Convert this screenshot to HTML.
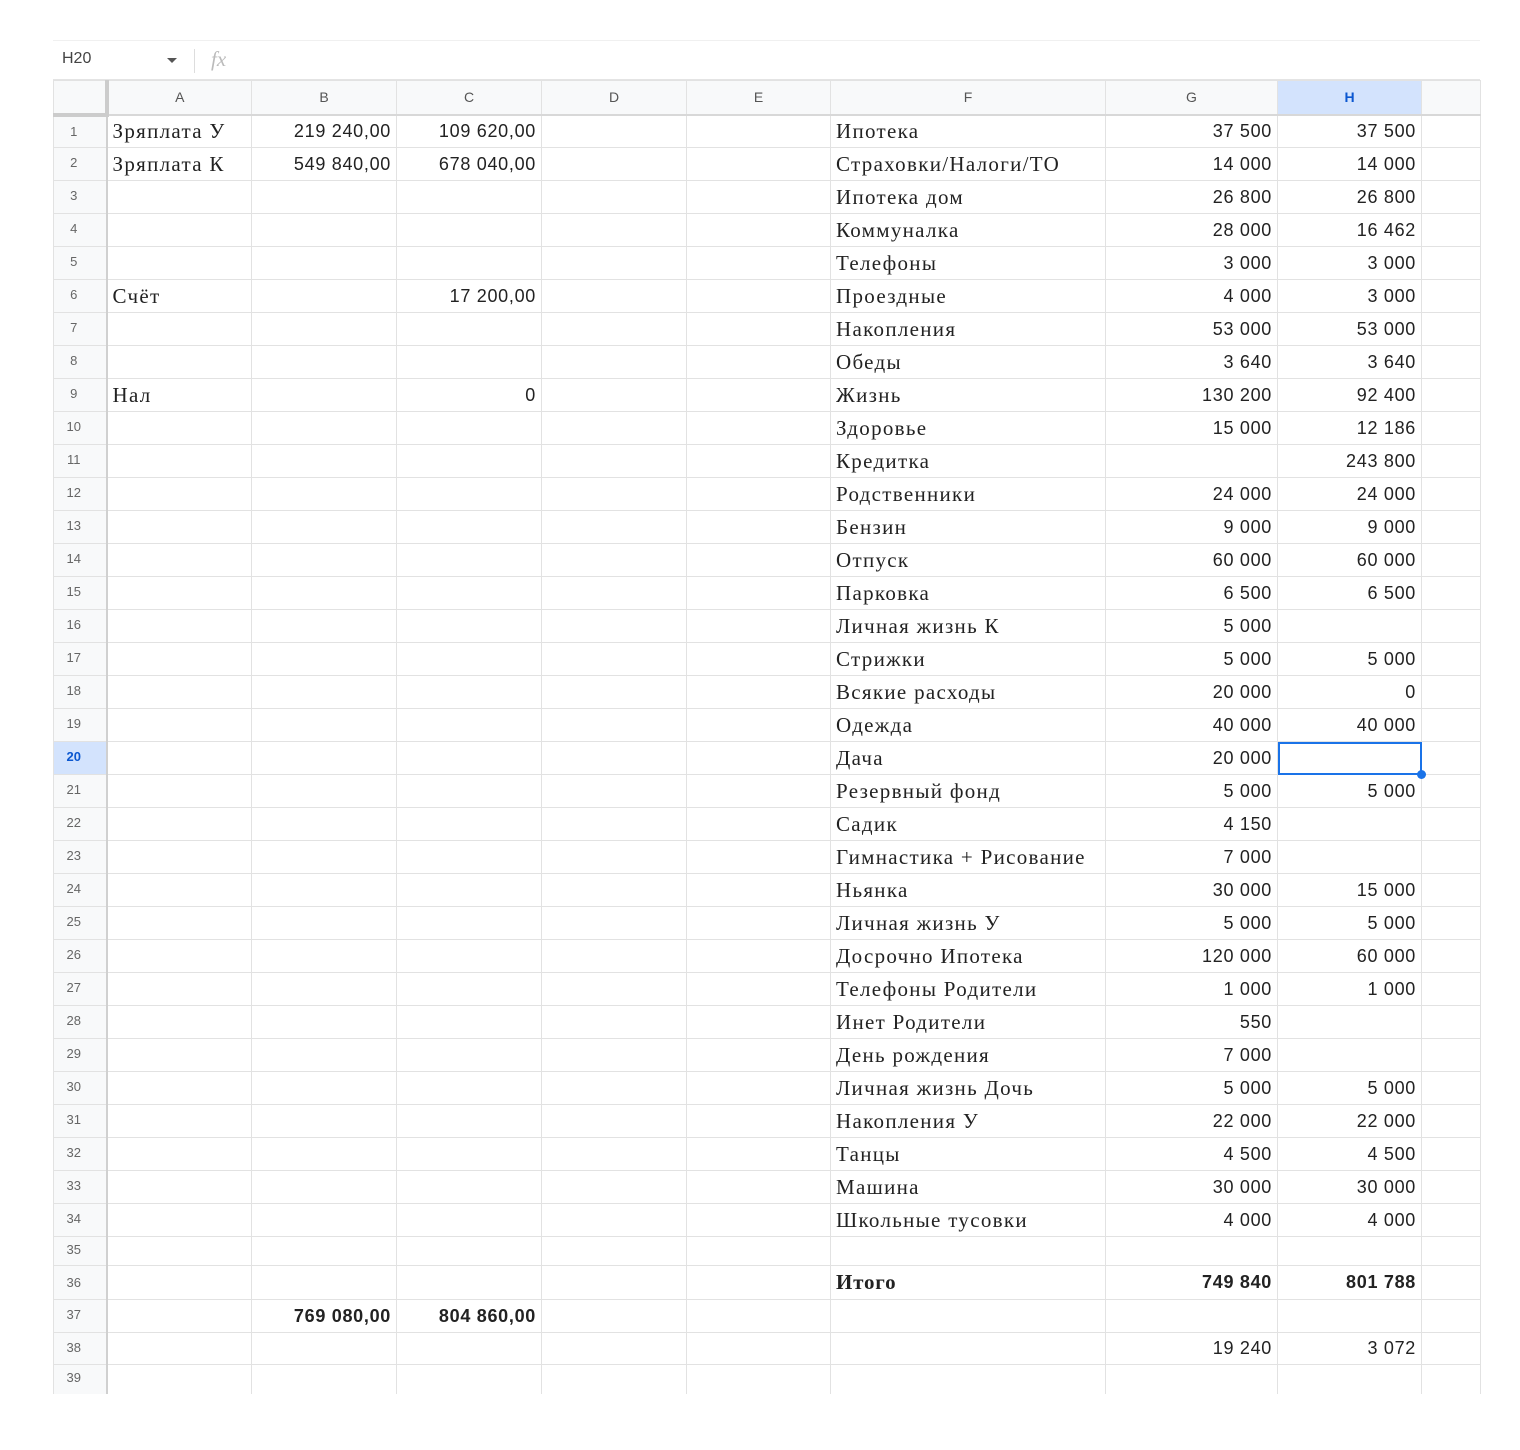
<!DOCTYPE html>
<html><head><meta charset="utf-8"><style>
body{margin:0;background:#fff;width:1520px;height:1450px;position:relative;overflow:hidden;font-family:"Liberation Sans",sans-serif}
.fb{position:absolute;left:53px;top:40px;width:1427px;height:38px;border-top:1px solid #f0f0f0;border-bottom:2px solid #e4e4e4}
.fb .nm{position:absolute;left:9px;top:9px;font-size:16px;color:#444}
.fb .ar{position:absolute;left:114px;top:17px;width:0;height:0;border-left:5px solid transparent;border-right:5px solid transparent;border-top:5px solid #555}
.fb .sp{position:absolute;left:141px;top:8px;width:1px;height:24px;background:#ddd}
.fb .fx{position:absolute;left:158px;top:6px;font-family:"Liberation Serif",serif;font-style:italic;font-size:21px;color:#bbb}
table{position:absolute;left:53px;top:80px;border-collapse:collapse;table-layout:fixed;width:1427px}
td{border:1px solid #e2e2e2;padding:0 5px;white-space:nowrap;overflow:visible;color:#2a2a2a;box-sizing:border-box}
tr.h td{background:#f8f9fa;height:34px;text-align:center;font-size:14px;color:#555;border-bottom:2px solid #d8d8d8}
td.r{background:#f8f9fa;text-align:center;font-size:13px;color:#666;border-right:2px solid #d0d0d0;padding:0 12px 0 0;vertical-align:top;padding-top:7px}
td.t{font-family:"Liberation Serif",serif;font-size:21px;letter-spacing:1.3px;color:#222}
td.n{text-align:right;font-size:18px;letter-spacing:0.7px;color:#222}
.b{font-weight:bold}
td.sel{outline:2px solid #1a73e8;outline-offset:-2px;position:relative}
.dot{position:absolute;right:-5px;bottom:-5px;width:9px;height:9px;border-radius:50%;background:#1a73e8}
</style></head><body>
<div class="fb"><span class="nm">H20</span><span class="ar"></span><span class="sp"></span><span class="fx">fx</span></div>
<table>
<colgroup><col style="width:53px"><col style="width:145px"><col style="width:145px"><col style="width:145px"><col style="width:145px"><col style="width:144px"><col style="width:275px"><col style="width:172px"><col style="width:144px"><col style="width:59px"></colgroup>
<tr class="h"><td style="border-right:4px solid #ccc;border-bottom:4px solid #ccc"></td><td>A</td><td>B</td><td>C</td><td>D</td><td>E</td><td>F</td><td>G</td><td style="background:#d3e3fd;color:#0b57d0;font-weight:bold">H</td><td></td></tr>
<tr style="height:33px"><td class="r">1</td><td class="t">Зряплата У</td><td class="n">219 240,00</td><td class="n">109 620,00</td><td></td><td></td><td class="t">Ипотека</td><td class="n">37 500</td><td class="n">37 500</td><td></td></tr>
<tr style="height:33px"><td class="r">2</td><td class="t">Зряплата К</td><td class="n">549 840,00</td><td class="n">678 040,00</td><td></td><td></td><td class="t">Страховки/Налоги/ТО</td><td class="n">14 000</td><td class="n">14 000</td><td></td></tr>
<tr style="height:33px"><td class="r">3</td><td></td><td></td><td></td><td></td><td></td><td class="t">Ипотека дом</td><td class="n">26 800</td><td class="n">26 800</td><td></td></tr>
<tr style="height:33px"><td class="r">4</td><td></td><td></td><td></td><td></td><td></td><td class="t">Коммуналка</td><td class="n">28 000</td><td class="n">16 462</td><td></td></tr>
<tr style="height:33px"><td class="r">5</td><td></td><td></td><td></td><td></td><td></td><td class="t">Телефоны</td><td class="n">3 000</td><td class="n">3 000</td><td></td></tr>
<tr style="height:33px"><td class="r">6</td><td class="t">Счёт</td><td></td><td class="n">17 200,00</td><td></td><td></td><td class="t">Проездные</td><td class="n">4 000</td><td class="n">3 000</td><td></td></tr>
<tr style="height:33px"><td class="r">7</td><td></td><td></td><td></td><td></td><td></td><td class="t">Накопления</td><td class="n">53 000</td><td class="n">53 000</td><td></td></tr>
<tr style="height:33px"><td class="r">8</td><td></td><td></td><td></td><td></td><td></td><td class="t">Обеды</td><td class="n">3 640</td><td class="n">3 640</td><td></td></tr>
<tr style="height:33px"><td class="r">9</td><td class="t">Нал</td><td></td><td class="n">0</td><td></td><td></td><td class="t">Жизнь</td><td class="n">130 200</td><td class="n">92 400</td><td></td></tr>
<tr style="height:33px"><td class="r">10</td><td></td><td></td><td></td><td></td><td></td><td class="t">Здоровье</td><td class="n">15 000</td><td class="n">12 186</td><td></td></tr>
<tr style="height:33px"><td class="r">11</td><td></td><td></td><td></td><td></td><td></td><td class="t">Кредитка</td><td class="n"></td><td class="n">243 800</td><td></td></tr>
<tr style="height:33px"><td class="r">12</td><td></td><td></td><td></td><td></td><td></td><td class="t">Родственники</td><td class="n">24 000</td><td class="n">24 000</td><td></td></tr>
<tr style="height:33px"><td class="r">13</td><td></td><td></td><td></td><td></td><td></td><td class="t">Бензин</td><td class="n">9 000</td><td class="n">9 000</td><td></td></tr>
<tr style="height:33px"><td class="r">14</td><td></td><td></td><td></td><td></td><td></td><td class="t">Отпуск</td><td class="n">60 000</td><td class="n">60 000</td><td></td></tr>
<tr style="height:33px"><td class="r">15</td><td></td><td></td><td></td><td></td><td></td><td class="t">Парковка</td><td class="n">6 500</td><td class="n">6 500</td><td></td></tr>
<tr style="height:33px"><td class="r">16</td><td></td><td></td><td></td><td></td><td></td><td class="t">Личная жизнь К</td><td class="n">5 000</td><td class="n"></td><td></td></tr>
<tr style="height:33px"><td class="r">17</td><td></td><td></td><td></td><td></td><td></td><td class="t">Стрижки</td><td class="n">5 000</td><td class="n">5 000</td><td></td></tr>
<tr style="height:33px"><td class="r">18</td><td></td><td></td><td></td><td></td><td></td><td class="t">Всякие расходы</td><td class="n">20 000</td><td class="n">0</td><td></td></tr>
<tr style="height:33px"><td class="r">19</td><td></td><td></td><td></td><td></td><td></td><td class="t">Одежда</td><td class="n">40 000</td><td class="n">40 000</td><td></td></tr>
<tr style="height:33px"><td class="r" style="background:#d3e3fd;color:#0b57d0;font-weight:bold">20</td><td></td><td></td><td></td><td></td><td></td><td class="t">Дача</td><td class="n">20 000</td><td class="n sel"><span class="dot"></span></td><td></td></tr>
<tr style="height:33px"><td class="r">21</td><td></td><td></td><td></td><td></td><td></td><td class="t">Резервный фонд</td><td class="n">5 000</td><td class="n">5 000</td><td></td></tr>
<tr style="height:33px"><td class="r">22</td><td></td><td></td><td></td><td></td><td></td><td class="t">Садик</td><td class="n">4 150</td><td class="n"></td><td></td></tr>
<tr style="height:33px"><td class="r">23</td><td></td><td></td><td></td><td></td><td></td><td class="t">Гимнастика + Рисование</td><td class="n">7 000</td><td class="n"></td><td></td></tr>
<tr style="height:33px"><td class="r">24</td><td></td><td></td><td></td><td></td><td></td><td class="t">Ньянка</td><td class="n">30 000</td><td class="n">15 000</td><td></td></tr>
<tr style="height:33px"><td class="r">25</td><td></td><td></td><td></td><td></td><td></td><td class="t">Личная жизнь У</td><td class="n">5 000</td><td class="n">5 000</td><td></td></tr>
<tr style="height:33px"><td class="r">26</td><td></td><td></td><td></td><td></td><td></td><td class="t">Досрочно Ипотека</td><td class="n">120 000</td><td class="n">60 000</td><td></td></tr>
<tr style="height:33px"><td class="r">27</td><td></td><td></td><td></td><td></td><td></td><td class="t">Телефоны Родители</td><td class="n">1 000</td><td class="n">1 000</td><td></td></tr>
<tr style="height:33px"><td class="r">28</td><td></td><td></td><td></td><td></td><td></td><td class="t">Инет Родители</td><td class="n">550</td><td class="n"></td><td></td></tr>
<tr style="height:33px"><td class="r">29</td><td></td><td></td><td></td><td></td><td></td><td class="t">День рождения</td><td class="n">7 000</td><td class="n"></td><td></td></tr>
<tr style="height:33px"><td class="r">30</td><td></td><td></td><td></td><td></td><td></td><td class="t">Личная жизнь Дочь</td><td class="n">5 000</td><td class="n">5 000</td><td></td></tr>
<tr style="height:33px"><td class="r">31</td><td></td><td></td><td></td><td></td><td></td><td class="t">Накопления У</td><td class="n">22 000</td><td class="n">22 000</td><td></td></tr>
<tr style="height:33px"><td class="r">32</td><td></td><td></td><td></td><td></td><td></td><td class="t">Танцы</td><td class="n">4 500</td><td class="n">4 500</td><td></td></tr>
<tr style="height:33px"><td class="r">33</td><td></td><td></td><td></td><td></td><td></td><td class="t">Машина</td><td class="n">30 000</td><td class="n">30 000</td><td></td></tr>
<tr style="height:33px"><td class="r">34</td><td></td><td></td><td></td><td></td><td></td><td class="t">Школьные тусовки</td><td class="n">4 000</td><td class="n">4 000</td><td></td></tr>
<tr style="height:29px"><td class="r" style="padding-top:5px">35</td><td></td><td></td><td></td><td></td><td></td><td></td><td></td><td></td><td></td></tr>
<tr style="height:34px"><td class="r" style="padding-top:9px">36</td><td></td><td></td><td></td><td></td><td></td><td class="t b" style="letter-spacing:0.8px">Итого</td><td class="n b">749 840</td><td class="n b">801 788</td><td></td></tr>
<tr style="height:33px"><td class="r">37</td><td></td><td class="n b">769 080,00</td><td class="n b">804 860,00</td><td></td><td></td><td></td><td></td><td></td><td></td></tr>
<tr style="height:32px"><td class="r">38</td><td></td><td></td><td></td><td></td><td></td><td></td><td class="n">19 240</td><td class="n">3 072</td><td></td></tr>
<tr style="height:29px"><td class="r" style="padding-top:5px;border-bottom:none">39</td><td style="border-bottom:none"></td><td style="border-bottom:none"></td><td style="border-bottom:none"></td><td style="border-bottom:none"></td><td style="border-bottom:none"></td><td style="border-bottom:none"></td><td style="border-bottom:none"></td><td style="border-bottom:none"></td><td style="border-bottom:none"></td></tr>
</table>
</body></html>
